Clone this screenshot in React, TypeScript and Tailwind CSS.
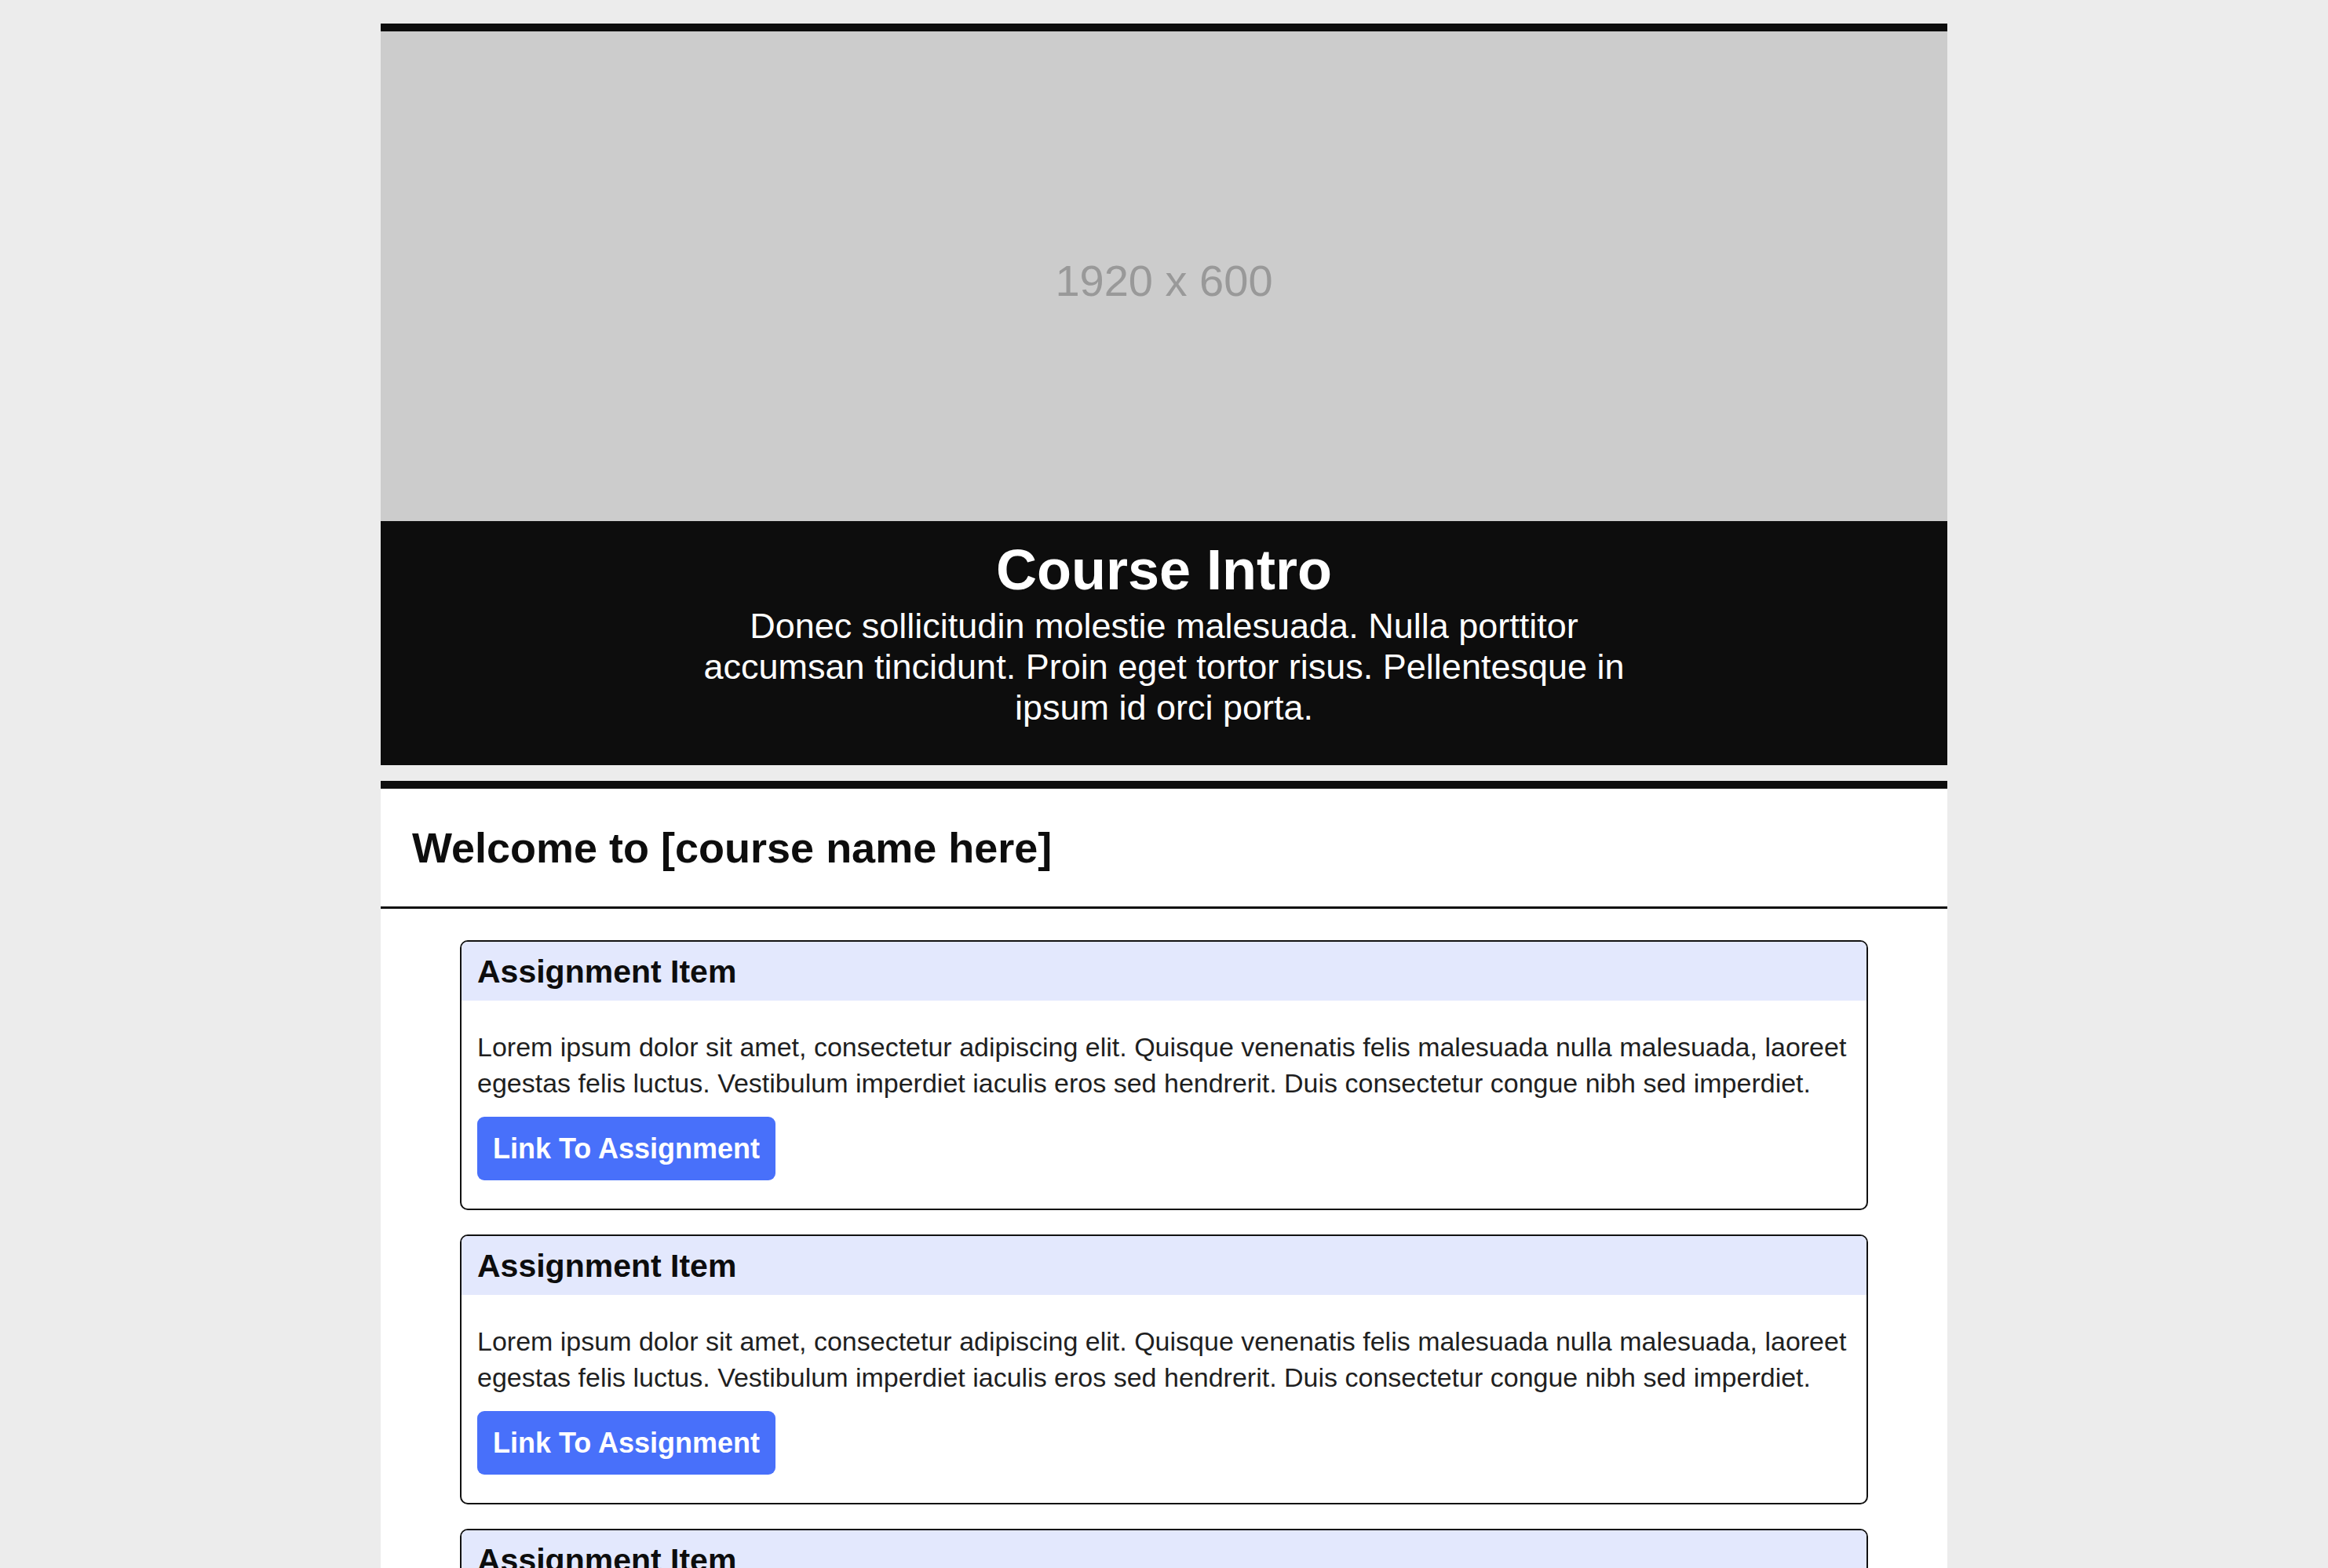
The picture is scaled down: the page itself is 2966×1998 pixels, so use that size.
import React from "react";

const font = "font-['Liberation_Sans',Arial,Helvetica,sans-serif]";

function AssignmentCard() {
  return (
    <div className="border-2 border-[#111111] rounded-[10px] overflow-hidden bg-white">
      <div className="h-[75px] bg-[#e3e8fd] flex items-center px-[20px]">
        <h3 className="text-[41px] font-bold text-[#0d0d0d] leading-[48px]">Assignment Item</h3>
      </div>
      <div className="px-[20px] pt-[36px] pb-[36px]">
        <p className="text-[34px] leading-[46px] text-[#1f1f1f]">
          Lorem ipsum dolor sit amet, consectetur adipiscing elit. Quisque venenatis felis malesuada nulla malesuada, laoreet egestas felis luctus. Vestibulum imperdiet iaculis eros sed hendrerit. Duis consectetur congue nibh sed imperdiet.
        </p>
        <a
          href="#"
          className="mt-[20px] inline-block bg-[#4870fa] text-white font-bold text-[36px] leading-[41px] px-[20px] py-[20px] rounded-[9px]"
        >
          Link To Assignment
        </a>
      </div>
    </div>
  );
}

export default function App() {
  return (
    <div className={`min-h-screen bg-[#ececec] ${font} pt-[30px]`}>
      <div className="mx-auto w-[1996px]">
        <section className="border-t-[10px] border-[#0d0d0d]">
          <div className="h-[624px] bg-[#cccccc] flex items-center justify-center pt-[12px]">
            <span className="text-[56px] text-[#999999]">1920 x 600</span>
          </div>
          <div className="bg-[#0d0d0d] text-white text-center pt-[22px] pb-[47px]">
            <h1 className="text-[72px] leading-[80px] font-bold">Course Intro</h1>
            <p className="mt-[6px] text-[45px] leading-[52px] max-w-[1200px] mx-auto">
              Donec sollicitudin molestie malesuada. Nulla porttitor accumsan tincidunt. Proin eget tortor risus. Pellentesque in ipsum id orci porta.
            </p>
          </div>
        </section>
        <section className="mt-[20px] border-t-[10px] border-[#0d0d0d] bg-white">
          <div className="px-[40px] py-[40px] border-b-[3px] border-[#0d0d0d]">
            <h2 className="text-[54px] leading-[70px] font-bold text-[#0d0d0d]">Welcome to [course name here]</h2>
          </div>
          <div className="px-[101px] pt-[40px] pb-[40px] flex flex-col gap-[31px]">
            <AssignmentCard />
            <AssignmentCard />
            <AssignmentCard />
            <AssignmentCard />
          </div>
        </section>
      </div>
    </div>
  );
}
